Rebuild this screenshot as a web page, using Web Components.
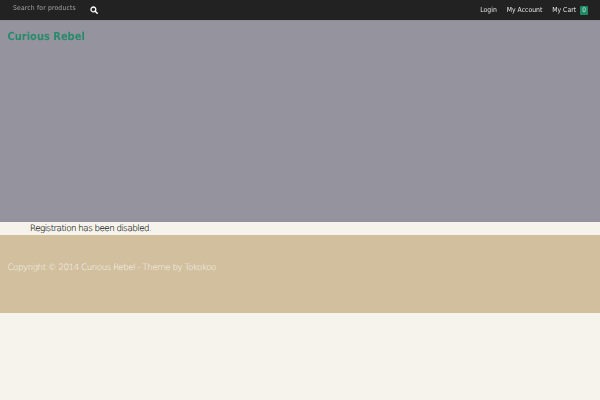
<!DOCTYPE html>
<html>
<head>
<meta charset="utf-8">
<title>Curious Rebel</title>
<style>
  html, body { margin: 0; padding: 0; }
  body {
    background: #f6f3ec;
    font-family: "DejaVu Sans", sans-serif;
    text-rendering: geometricPrecision;
    height: 400px;
    overflow: hidden;
  }
</style>
</head>
<body>
<site-topbar>
  <span slot="search">Search for products</span>
  <top-link>Login</top-link>
  <top-link>My Account</top-link>
  <top-link>My Cart <cart-count>0</cart-count></top-link>
</site-topbar>
<site-hero>Curious Rebel</site-hero>
<page-notice>Registration has been disabled.</page-notice>
<site-footer>Copyright © 2014 Curious Rebel - Theme by Tokokoo</site-footer>

<script>
class SiteTopbar extends HTMLElement {
  constructor() {
    super();
    this.attachShadow({ mode: 'open' });
    this.shadowRoot.innerHTML = `
      <style>
        :host {
          display: flex;
          align-items: center;
          justify-content: space-between;
          height: 20px;
          background: #222222;
          padding: 0 12px 0 13px;
          box-sizing: border-box;
          font-stretch: condensed;
        }
        .search { display: flex; align-items: center; gap: 14px; }
        .placeholder { font-size: 6.7px; letter-spacing: 0.2px; color: #a5a5a5; margin-top: -4px; filter: blur(0.2px); }
        svg { display: block; width: 8px; height: 8px; }
        .links { display: flex; align-items: center; gap: 10px; filter: blur(0.2px); }
      </style>
      <div class="search">
        <div class="placeholder"><slot name="search"></slot></div>
        <svg viewBox="0 0 16 16" aria-hidden="true">
          <circle cx="6.8" cy="6.8" r="4.8" fill="none" stroke="#fff" stroke-width="2.6"/>
          <path d="M10.4 10.4 14.4 14.4" stroke="#fff" stroke-width="3" stroke-linecap="round"/>
        </svg>
      </div>
      <div class="links"><slot></slot></div>
    `;
  }
}

class TopLink extends HTMLElement {
  constructor() {
    super();
    this.attachShadow({ mode: 'open' });
    this.shadowRoot.innerHTML = `
      <style>
        :host { display: block; font-size: 6.8px; color: #e4e4e4; white-space: nowrap; }
      </style>
      <slot></slot>
    `;
  }
}

class CartCount extends HTMLElement {
  constructor() {
    super();
    this.attachShadow({ mode: 'open' });
    this.shadowRoot.innerHTML = `
      <style>
        :host {
          display: inline-block;
          width: 8px;
          height: 9px;
          line-height: 9px;
          margin-left: 2px;
          text-align: center;
          background: #1f8a68;
          color: #cfe6dc;
          font-size: 6.5px;
          border-radius: 1px;
        }
      </style>
      <slot></slot>
    `;
  }
}

class SiteHero extends HTMLElement {
  constructor() {
    super();
    this.attachShadow({ mode: 'open' });
    this.shadowRoot.innerHTML = `
      <style>
        :host {
          display: block;
          height: 202px;
          box-sizing: border-box;
          padding: 9px 8px 0 7.5px;
          background: #95949e;
          border-top: 1px solid #8e8d97;
          color: #2a8a6c;
          font-size: 11px;
          font-stretch: condensed;
          font-weight: bold;
          line-height: 13px;
        }
        .title { filter: blur(0.2px); }
      </style>
      <div class="title"><slot></slot></div>
    `;
  }
}

class PageNotice extends HTMLElement {
  constructor() {
    super();
    this.attachShadow({ mode: 'open' });
    this.shadowRoot.innerHTML = `
      <style>
        :host {
          display: block;
          height: 13px;
          padding: 1px 0 0 30px;
          box-sizing: border-box;
          font-size: 8.7px;
          font-weight: 200;
          letter-spacing: -0.5px;
          line-height: 12px;
          color: #111111;
          -webkit-text-stroke: 0.12px #111111;
          white-space: nowrap;
        }
      </style>
      <slot></slot>
    `;
  }
}

class SiteFooter extends HTMLElement {
  constructor() {
    super();
    this.attachShadow({ mode: 'open' });
    this.shadowRoot.innerHTML = `
      <style>
        :host {
          display: block;
          height: 78px;
          box-sizing: border-box;
          padding: 27px 8px 0 7.5px;
          background: #d1bf9e;
          color: #fbf8f0;
          font-size: 8.7px;
          font-weight: 200;
          letter-spacing: -0.45px;
          line-height: 12px;
          white-space: nowrap;
        }
      </style>
      <slot></slot>
    `;
  }
}

customElements.define('site-topbar', SiteTopbar);
customElements.define('top-link', TopLink);
customElements.define('cart-count', CartCount);
customElements.define('site-hero', SiteHero);
customElements.define('page-notice', PageNotice);
customElements.define('site-footer', SiteFooter);
</script>
</body>
</html>
